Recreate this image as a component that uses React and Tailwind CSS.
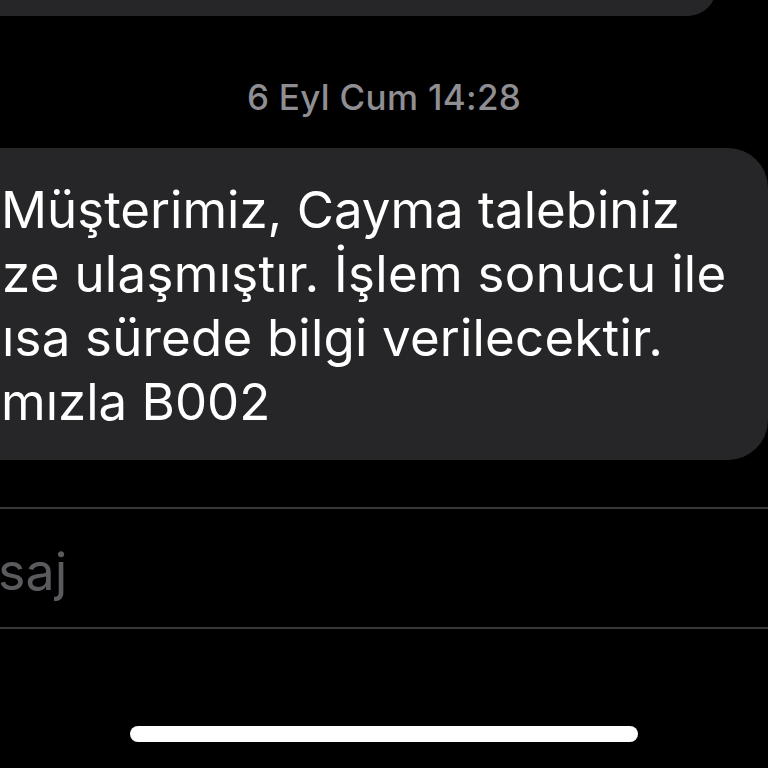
export default function App() {
  const font = { fontFamily: 'Inter, "Noto Sans", sans-serif' }
  return (
    <div className="w-[768px] h-[768px] bg-black overflow-hidden flex flex-col text-white" style={font}>
      {/* previous bubble, clipped by the top edge */}
      <div className="w-[716px] h-[56px] -mt-[40px] bg-[#262628] rounded-r-[40px] shrink-0" />

      <div className="h-[132px] shrink-0 flex items-center justify-center pt-[30px]">
        <span className="text-[35px] font-medium text-[#8e8e93] tracking-[0.3px]">6 Eyl Cum 14:28</span>
      </div>

      <div className="bg-[#262628] rounded-r-[40px] pt-[30px] pb-[26px] text-[51px] leading-[64px] whitespace-nowrap shrink-0">
        <div className="pl-[1px]">Müşterimiz, Cayma talebiniz</div>
        <div className="pl-[2px] tracking-[0.3px]">ze ulaşmıştır. İşlem sonucu ile</div>
        <div className="pl-[2px] tracking-[0.2px]">ısa sürede bilgi verilecektir.</div>
        <div className="pl-[1px]">mızla B002</div>
      </div>

      <div className="mt-[47px] h-[122px] border-y-2 border-[#38383a] flex items-center shrink-0">
        <span className="text-[52px] text-[#5b5b5f] -ml-[2px] mt-[8px]">saj</span>
      </div>

      <div className="flex-1 flex items-end justify-center pb-[26px]">
        <div className="w-[508px] h-[16px] rounded-full bg-white" />
      </div>
    </div>
  )
}
